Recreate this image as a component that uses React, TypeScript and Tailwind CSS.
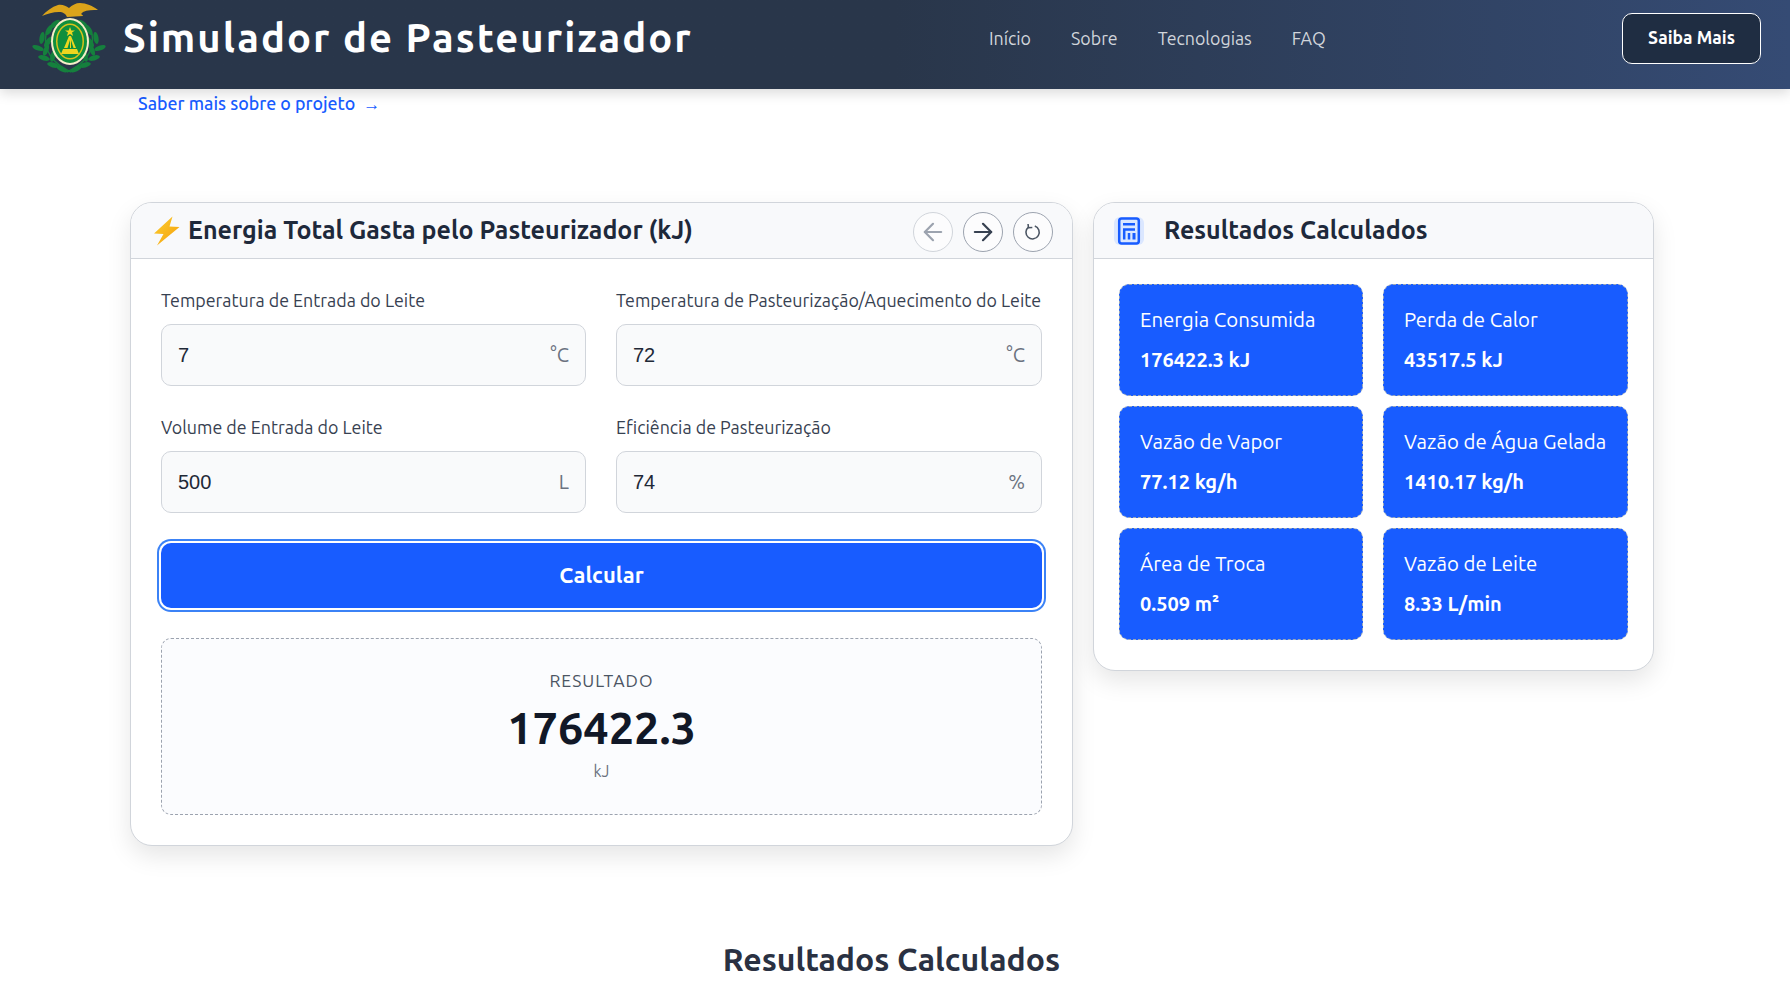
import { ArrowLeft, ArrowRight } from "lucide-react";

const font = "font-['Ubuntu','Noto_Sans',sans-serif]";

function Logo() {
  const leaves: [number, number, number][] = [
    [25, 24, -40], [19, 30, -60], [12, 38, -80], [18, 42, -55], [8, 48, 20], [16, 50, -70], [14, 58, 15], [23, 56, -75], [23, 65, 15], [32, 69, 25],
  ];
  return (
    <svg width="78" height="76" viewBox="0 0 78 76" className="shrink-0">
      <path d="M12 16c4-5 10-9 16-11 4-1 8 1 11 3 3-3 7-5 11-5 6 0 13 3 18 7-5 0-11 0-15 2l-2 2c1 1 2 1 2 2l-16 1c-1-3-4-5-8-5-6 0-12 2-17 4z" fill="#dba41a" />
      <path d="M16 34c-3 16 7 30 25 38M62 34c3 16-7 30-25 38" fill="none" stroke="#15803d" strokeWidth="1.4" />
      {leaves.map(([x, y, r], i) => (
        <g key={i}>
          <ellipse cx={x} cy={y} rx="6" ry="2.5" fill="#15803d" transform={`rotate(${r} ${x} ${y})`} />
          <ellipse cx={78 - x} cy={y} rx="6" ry="2.5" fill="#15803d" transform={`rotate(${-r} ${78 - x} ${y})`} />
        </g>
      ))}
      <ellipse cx="40" cy="41.5" rx="19" ry="23.5" fill="#f5efc8" />
      <ellipse cx="40" cy="41.5" rx="17" ry="21.5" fill="#0f8f3d" />
      <ellipse cx="40" cy="41.5" rx="14" ry="18" fill="#d8c21c" />
      <ellipse cx="40" cy="41.5" rx="12.5" ry="16.5" fill="#0f8f3d" />
      <path d="M40 27l1.3 3.4h3.7l-3 2.2 1.1 3.4-3.1-2.1-3.1 2.1 1.1-3.4-3-2.2h3.7z" fill="#ecd61f" />
      <path d="M39 36h2l5 12h-2.5l-2.5-8v8h-1v-8l-2.5 8H34z" fill="#ecd61f" />
      <path d="M33 49h14l2 5H31z" fill="#ecd61f" />
    </svg>
  );
}

function Bolt() {
  return (
    <svg width="28" height="30" viewBox="0 0 28 30" className="shrink-0">
      <defs>
        <linearGradient id="bolt" x1="0" y1="0" x2="1" y2="1">
          <stop offset="0" stopColor="#fbcf30" />
          <stop offset="1" stopColor="#f59e0b" />
        </linearGradient>
      </defs>
      <path d="M19.5 0.5 1 17.5l9.5 0.5L4 29.5 26.5 11l-10 -0.5z" fill="url(#bolt)" />
    </svg>
  );
}

function Reload() {
  return (
    <svg width="18" height="18" viewBox="0 0 16 16" fill="none" stroke="#4b5563" strokeWidth="1.4">
      <path d="M9.6 2.7A5.9 5.9 0 1 1 4 3.6" />
      <path d="M3.6 0.9 4 4.2 7.4 4" />
    </svg>
  );
}

function Calc() {
  return (
    <div className="w-[30px] h-7 rounded-md bg-[#dbe7ff] flex items-center justify-center shrink-0">
      <svg width="24" height="28" viewBox="0 0 24 28" fill="none" stroke="#185cff" strokeWidth="2.5" strokeLinecap="butt">
        <rect x="2.2" y="1.5" width="19.6" height="25" rx="2.5" />
        <path d="M6 7.2h12M6 12.4h12M7.2 12.4v10M12 16v6.4" />
        <path d="M17 16v6.4" strokeWidth="3" />
      </svg>
    </div>
  );
}

function Field({ label, value, unit }: { label: string; value: string; unit: string }) {
  return (
    <div className="flex flex-col">
      <label className="text-[17.85px] leading-[24px] text-[#374151] whitespace-nowrap mb-[12px]">{label}</label>
      <div className="h-[62px] border border-[#d1d5db] rounded-[10px] bg-[#f9fafb] px-4 flex items-center justify-between">
        <span className="font-['Liberation_Sans',sans-serif] text-[20px] text-[#1f2937]">{value}</span>
        <span className="text-[20px] text-[#6b7280]">{unit}</span>
      </div>
    </div>
  );
}

function Stat({ label, value }: { label: string; value: string }) {
  return (
    <div className="h-[112px] rounded-[10px] bg-[#185cff] border border-dashed border-[#9aa8b8] pl-5 pt-[20px] text-white">
      <div className="text-[20.4px] leading-[30px] whitespace-nowrap">{label}</div>
      <div className="text-[20px] leading-[28px] font-semibold mt-[11px] whitespace-nowrap">{value}</div>
    </div>
  );
}

export default function App() {
  return (
    <div className={`${font} h-[982px] overflow-hidden bg-white`}>
      <header className="h-[89px] bg-gradient-to-r from-[#29364a] via-[#29364a] to-[#354b74] shadow-[0_4px_12px_rgba(0,0,0,0.15)] flex items-center pl-[30px] pr-[29px] pb-[13px] relative">
        <Logo />
        <h1 className="ml-[15px] text-[40px] font-semibold text-white tracking-[2px] whitespace-nowrap">Simulador de Pasteurizador</h1>
        <nav className="absolute left-[989px] top-[25px] flex gap-10 text-[17.8px] text-[#d1d5db]">
          <span>Início</span>
          <span>Sobre</span>
          <span>Tecnologias</span>
          <span>FAQ</span>
        </nav>
        <button className="ml-auto w-[139px] h-[51px] rounded-[10px] border border-white bg-[#1f2d42] text-white text-[17.5px] font-semibold">Saiba Mais</button>
      </header>

      <a className="block pl-[138px] mt-[2px] text-[#185cff] text-[17.8px] leading-[25px] font-medium whitespace-nowrap">
        Saber mais sobre o projeto <span className="ml-1 text-[17px]">→</span>
      </a>

      <main className="pl-[130px] mt-[86px] flex items-start gap-5">
        <section className="w-[943px] rounded-[22px] border border-[#d1d5db] bg-white shadow-[0_10px_25px_rgba(0,0,0,0.1)] overflow-hidden">
          <div className="h-[56px] border-b border-[#d1d5db] bg-[#f8f9fb] flex items-center pl-[22px] pr-[19px]">
            <Bolt />
            <h2 className="ml-[7px] text-[25px] font-semibold text-[#1e293b] whitespace-nowrap">Energia Total Gasta pelo Pasteurizador (kJ)</h2>
            <div className="ml-auto flex gap-[10px] mt-[2px]">
              <button className="w-10 h-10 rounded-full bg-[#fcfcfd] border border-[#d1d5db] flex items-center justify-center text-[#9ca3af]"><ArrowLeft size={28} strokeWidth={1.9} /></button>
              <button className="w-10 h-10 rounded-full bg-[#fcfcfd] border border-[#9ca3af] flex items-center justify-center text-[#374151]"><ArrowRight size={28} strokeWidth={1.9} /></button>
              <button className="w-10 h-10 rounded-full bg-[#fcfcfd] border border-[#9ca3af] flex items-center justify-center"><Reload /></button>
            </div>
          </div>
          <div className="px-[30px] pt-[29px] pb-[30px]">
            <div className="grid grid-cols-[425px_426px] gap-x-[30px] gap-y-[29px]">
              <Field label="Temperatura de Entrada do Leite" value="7" unit="°C" />
              <Field label="Temperatura de Pasteurização/Aquecimento do Leite" value="72" unit="°C" />
              <Field label="Volume de Entrada do Leite" value="500" unit="L" />
              <Field label="Eficiência de Pasteurização" value="74" unit="%" />
            </div>
            <button className="mt-[30px] w-full h-[65px] pb-[2px] rounded-[10px] bg-[#185cff] text-white text-[22px] font-semibold ring-2 ring-white shadow-[0_0_0_4px_#3b82f6]">Calcular</button>
            <div className="mt-[30px] h-[177px] rounded-[10px] border border-dashed border-[#9ca3af] bg-[#fbfcfe] flex flex-col items-center pt-[29px]">
              <div className="text-[17.5px] leading-[26px] tracking-[1px] text-[#4b5563]">RESULTADO</div>
              <div className="text-[45px] leading-[56px] font-semibold text-[#111827] mt-[6px]">176422.3</div>
              <div className="text-[16px] leading-[24px] text-[#6b7280] mt-[3px]">kJ</div>
            </div>
          </div>
        </section>

        <section className="w-[561px] rounded-[22px] border border-[#d1d5db] bg-white shadow-[0_10px_25px_rgba(0,0,0,0.1)] overflow-hidden">
          <div className="h-[56px] border-b border-[#d1d5db] bg-[#f8f9fb] flex items-center pl-[20px]">
            <Calc />
            <h2 className="ml-[20px] text-[25px] font-semibold text-[#1e293b] whitespace-nowrap">Resultados Calculados</h2>
          </div>
          <div className="grid grid-cols-[244px_245px] gap-x-5 gap-y-[10px] px-[25px] pt-[25px] pb-[30px]">
            <Stat label="Energia Consumida" value="176422.3 kJ" />
            <Stat label="Perda de Calor" value="43517.5 kJ" />
            <Stat label="Vazão de Vapor" value="77.12 kg/h" />
            <Stat label="Vazão de Água Gelada" value="1410.17 kg/h" />
            <Stat label="Área de Troca" value="0.509 m²" />
            <Stat label="Vazão de Leite" value="8.33 L/min" />
          </div>
        </section>
      </main>

      <h2 className="mt-[93px] w-[1783px] text-center text-[32px] font-semibold text-[#2a3142] leading-[40px]">Resultados Calculados</h2>
    </div>
  );
}
